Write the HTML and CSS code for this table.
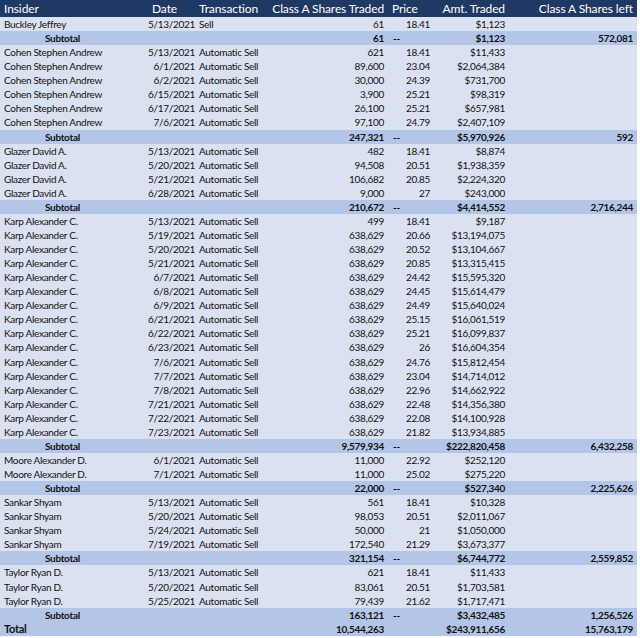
FILE: index.html
```html
<!DOCTYPE html>
<html>
<head>
<meta charset="utf-8">
<link rel="stylesheet" href="styles.css">
</head>
<body>
<table class="grid">
<colgroup>
<col class="c-a"><col class="c-b"><col class="c-c"><col class="c-d"><col class="c-e"><col class="c-f"><col class="c-g">
</colgroup>
<thead>
<tr class="head"><th class="name">Insider</th><th class="hdate">Date</th><th class="tx">Transaction</th><th class="num">Class A Shares Traded</th><th class="hprice">Price</th><th class="amt">Amt. Traded</th><th class="left">Class A Shares left</th></tr>
</thead>
<tbody>
<tr><td class="name">Buckley Jeffrey</td><td class="date">5/13/2021</td><td class="tx">Sell</td><td class="num">61</td><td class="price">18.41</td><td class="amt">$1,123</td><td class="left"></td></tr>
<tr class="sub"><td class="stl">Subtotal</td><td></td><td></td><td class="num">61</td><td class="dash">--</td><td class="amt">$1,123</td><td class="left">572,081</td></tr>

<tr><td class="name">Cohen Stephen Andrew</td><td class="date">5/13/2021</td><td class="tx">Automatic Sell</td><td class="num">621</td><td class="price">18.41</td><td class="amt">$11,433</td><td class="left"></td></tr>
<tr><td class="name">Cohen Stephen Andrew</td><td class="date">6/1/2021</td><td class="tx">Automatic Sell</td><td class="num">89,600</td><td class="price">23.04</td><td class="amt">$2,064,384</td><td class="left"></td></tr>
<tr><td class="name">Cohen Stephen Andrew</td><td class="date">6/2/2021</td><td class="tx">Automatic Sell</td><td class="num">30,000</td><td class="price">24.39</td><td class="amt">$731,700</td><td class="left"></td></tr>
<tr><td class="name">Cohen Stephen Andrew</td><td class="date">6/15/2021</td><td class="tx">Automatic Sell</td><td class="num">3,900</td><td class="price">25.21</td><td class="amt">$98,319</td><td class="left"></td></tr>
<tr><td class="name">Cohen Stephen Andrew</td><td class="date">6/17/2021</td><td class="tx">Automatic Sell</td><td class="num">26,100</td><td class="price">25.21</td><td class="amt">$657,981</td><td class="left"></td></tr>
<tr><td class="name">Cohen Stephen Andrew</td><td class="date">7/6/2021</td><td class="tx">Automatic Sell</td><td class="num">97,100</td><td class="price">24.79</td><td class="amt">$2,407,109</td><td class="left"></td></tr>
<tr class="sub"><td class="stl">Subtotal</td><td></td><td></td><td class="num">247,321</td><td class="dash">--</td><td class="amt">$5,970,926</td><td class="left">592</td></tr>

<tr><td class="name">Glazer David A.</td><td class="date">5/13/2021</td><td class="tx">Automatic Sell</td><td class="num">482</td><td class="price">18.41</td><td class="amt">$8,874</td><td class="left"></td></tr>
<tr><td class="name">Glazer David A.</td><td class="date">5/20/2021</td><td class="tx">Automatic Sell</td><td class="num">94,508</td><td class="price">20.51</td><td class="amt">$1,938,359</td><td class="left"></td></tr>
<tr><td class="name">Glazer David A.</td><td class="date">5/21/2021</td><td class="tx">Automatic Sell</td><td class="num">106,682</td><td class="price">20.85</td><td class="amt">$2,224,320</td><td class="left"></td></tr>
<tr><td class="name">Glazer David A.</td><td class="date">6/28/2021</td><td class="tx">Automatic Sell</td><td class="num">9,000</td><td class="price">27</td><td class="amt">$243,000</td><td class="left"></td></tr>
<tr class="sub"><td class="stl">Subtotal</td><td></td><td></td><td class="num">210,672</td><td class="dash">--</td><td class="amt">$4,414,552</td><td class="left">2,716,244</td></tr>

<tr><td class="name">Karp Alexander C.</td><td class="date">5/13/2021</td><td class="tx">Automatic Sell</td><td class="num">499</td><td class="price">18.41</td><td class="amt">$9,187</td><td class="left"></td></tr>
<tr><td class="name">Karp Alexander C.</td><td class="date">5/19/2021</td><td class="tx">Automatic Sell</td><td class="num">638,629</td><td class="price">20.66</td><td class="amt">$13,194,075</td><td class="left"></td></tr>
<tr><td class="name">Karp Alexander C.</td><td class="date">5/20/2021</td><td class="tx">Automatic Sell</td><td class="num">638,629</td><td class="price">20.52</td><td class="amt">$13,104,667</td><td class="left"></td></tr>
<tr><td class="name">Karp Alexander C.</td><td class="date">5/21/2021</td><td class="tx">Automatic Sell</td><td class="num">638,629</td><td class="price">20.85</td><td class="amt">$13,315,415</td><td class="left"></td></tr>
<tr><td class="name">Karp Alexander C.</td><td class="date">6/7/2021</td><td class="tx">Automatic Sell</td><td class="num">638,629</td><td class="price">24.42</td><td class="amt">$15,595,320</td><td class="left"></td></tr>
<tr><td class="name">Karp Alexander C.</td><td class="date">6/8/2021</td><td class="tx">Automatic Sell</td><td class="num">638,629</td><td class="price">24.45</td><td class="amt">$15,614,479</td><td class="left"></td></tr>
<tr><td class="name">Karp Alexander C.</td><td class="date">6/9/2021</td><td class="tx">Automatic Sell</td><td class="num">638,629</td><td class="price">24.49</td><td class="amt">$15,640,024</td><td class="left"></td></tr>
<tr><td class="name">Karp Alexander C.</td><td class="date">6/21/2021</td><td class="tx">Automatic Sell</td><td class="num">638,629</td><td class="price">25.15</td><td class="amt">$16,061,519</td><td class="left"></td></tr>
<tr><td class="name">Karp Alexander C.</td><td class="date">6/22/2021</td><td class="tx">Automatic Sell</td><td class="num">638,629</td><td class="price">25.21</td><td class="amt">$16,099,837</td><td class="left"></td></tr>
<tr><td class="name">Karp Alexander C.</td><td class="date">6/23/2021</td><td class="tx">Automatic Sell</td><td class="num">638,629</td><td class="price">26</td><td class="amt">$16,604,354</td><td class="left"></td></tr>
<tr><td class="name">Karp Alexander C.</td><td class="date">7/6/2021</td><td class="tx">Automatic Sell</td><td class="num">638,629</td><td class="price">24.76</td><td class="amt">$15,812,454</td><td class="left"></td></tr>
<tr><td class="name">Karp Alexander C.</td><td class="date">7/7/2021</td><td class="tx">Automatic Sell</td><td class="num">638,629</td><td class="price">23.04</td><td class="amt">$14,714,012</td><td class="left"></td></tr>
<tr><td class="name">Karp Alexander C.</td><td class="date">7/8/2021</td><td class="tx">Automatic Sell</td><td class="num">638,629</td><td class="price">22.96</td><td class="amt">$14,662,922</td><td class="left"></td></tr>
<tr><td class="name">Karp Alexander C.</td><td class="date">7/21/2021</td><td class="tx">Automatic Sell</td><td class="num">638,629</td><td class="price">22.48</td><td class="amt">$14,356,380</td><td class="left"></td></tr>
<tr><td class="name">Karp Alexander C.</td><td class="date">7/22/2021</td><td class="tx">Automatic Sell</td><td class="num">638,629</td><td class="price">22.08</td><td class="amt">$14,100,928</td><td class="left"></td></tr>
<tr><td class="name">Karp Alexander C.</td><td class="date">7/23/2021</td><td class="tx">Automatic Sell</td><td class="num">638,629</td><td class="price">21.82</td><td class="amt">$13,934,885</td><td class="left"></td></tr>
<tr class="sub"><td class="stl">Subtotal</td><td></td><td></td><td class="num">9,579,934</td><td class="dash">--</td><td class="amt">$222,820,458</td><td class="left">6,432,258</td></tr>

<tr><td class="name">Moore Alexander D.</td><td class="date">6/1/2021</td><td class="tx">Automatic Sell</td><td class="num">11,000</td><td class="price">22.92</td><td class="amt">$252,120</td><td class="left"></td></tr>
<tr><td class="name">Moore Alexander D.</td><td class="date">7/1/2021</td><td class="tx">Automatic Sell</td><td class="num">11,000</td><td class="price">25.02</td><td class="amt">$275,220</td><td class="left"></td></tr>
<tr class="sub"><td class="stl">Subtotal</td><td></td><td></td><td class="num">22,000</td><td class="dash">--</td><td class="amt">$527,340</td><td class="left">2,225,626</td></tr>

<tr><td class="name">Sankar Shyam</td><td class="date">5/13/2021</td><td class="tx">Automatic Sell</td><td class="num">561</td><td class="price">18.41</td><td class="amt">$10,328</td><td class="left"></td></tr>
<tr><td class="name">Sankar Shyam</td><td class="date">5/20/2021</td><td class="tx">Automatic Sell</td><td class="num">98,053</td><td class="price">20.51</td><td class="amt">$2,011,067</td><td class="left"></td></tr>
<tr><td class="name">Sankar Shyam</td><td class="date">5/24/2021</td><td class="tx">Automatic Sell</td><td class="num">50,000</td><td class="price">21</td><td class="amt">$1,050,000</td><td class="left"></td></tr>
<tr><td class="name">Sankar Shyam</td><td class="date">7/19/2021</td><td class="tx">Automatic Sell</td><td class="num">172,540</td><td class="price">21.29</td><td class="amt">$3,673,377</td><td class="left"></td></tr>
<tr class="sub"><td class="stl">Subtotal</td><td></td><td></td><td class="num">321,154</td><td class="dash">--</td><td class="amt">$6,744,772</td><td class="left">2,559,852</td></tr>

<tr><td class="name">Taylor Ryan D.</td><td class="date">5/13/2021</td><td class="tx">Automatic Sell</td><td class="num">621</td><td class="price">18.41</td><td class="amt">$11,433</td><td class="left"></td></tr>
<tr><td class="name">Taylor Ryan D.</td><td class="date">5/20/2021</td><td class="tx">Automatic Sell</td><td class="num">83,061</td><td class="price">20.51</td><td class="amt">$1,703,581</td><td class="left"></td></tr>
<tr><td class="name">Taylor Ryan D.</td><td class="date">5/25/2021</td><td class="tx">Automatic Sell</td><td class="num">79,439</td><td class="price">21.62</td><td class="amt">$1,717,471</td><td class="left"></td></tr>
<tr class="sub"><td class="stl">Subtotal</td><td></td><td></td><td class="num">163,121</td><td class="dash">--</td><td class="amt">$3,432,485</td><td class="left">1,256,526</td></tr>

<tr class="sub total"><td class="name">Total</td><td></td><td></td><td class="num">10,544,263</td><td></td><td class="amt">$243,911,656</td><td class="left">15,763,179</td></tr>
</tbody>
</table>
</body>
</html>
```

FILE: styles.css
```css
html, body {
  margin: 0;
  padding: 0;
  background: #ffffff;
}

.grid {
  border-collapse: collapse;
  table-layout: fixed;
  width: 637px;
  font-family: Lato, "Liberation Sans", sans-serif;
  font-size: 10px;
  letter-spacing: -0.3px;
  color: #111111;
  background: #dae2f2;
}

.c-a { width: 148px; }
.c-b { width: 49px; }
.c-c { width: 73px; }
.c-d { width: 116px; }
.c-e { width: 46px; }
.c-f { width: 76px; }
.c-g { width: 129px; }

.grid th,
.grid td {
  padding: 0;
  white-space: nowrap;
  overflow: visible;
  height: 14.07px;
  line-height: 14px;
  vertical-align: middle;
}

.head th {
  height: 17px;
  background: #203864;
  color: #ffffff;
  font-weight: normal;
  font-size: 12px;
  letter-spacing: -0.1px;
  text-align: left;
}

.name { padding-left: 4px !important; text-align: left; }
.hdate { padding-left: 4px !important; }
.date { text-align: right; padding-right: 2px !important; }
.tx { padding-left: 2px !important; text-align: left; }
.head th.num, .num { text-align: right; padding-right: 2px !important; }
.hprice { padding-left: 6px !important; }
.price { text-align: right; padding-right: 2px !important; }
.dash { padding-left: 7px !important; text-align: left; }
.head th.amt, .amt { text-align: right; padding-right: 3px !important; }
.head th.left, .left { text-align: right; padding-right: 4px !important; }

.sub td {
  background: #b4c6e7;
  font-weight: bold;
}

.stl { padding-left: 45px !important; }
.total td.name { font-size: 11px; }
```
